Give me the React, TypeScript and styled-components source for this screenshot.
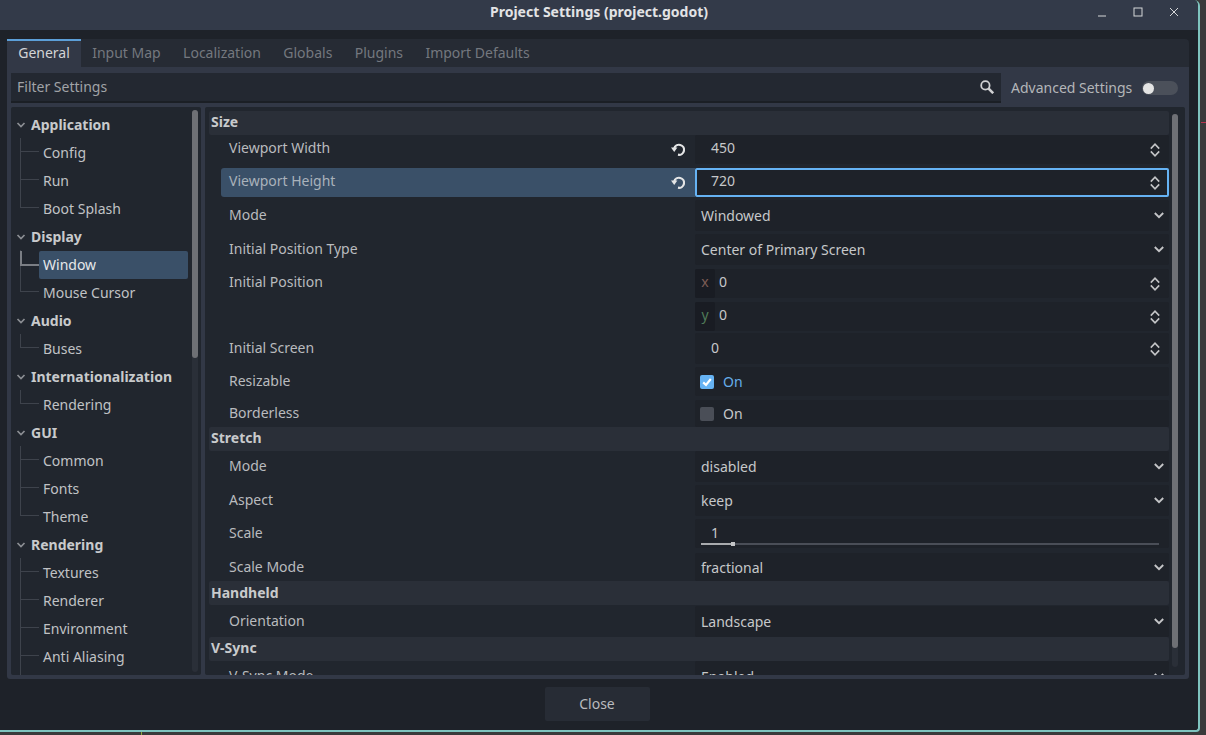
import React from 'react';
import styled, { createGlobalStyle } from 'styled-components';

const GlobalStyle = createGlobalStyle`
  html, body {
    margin: 0;
    padding: 0;
    background: #3a3a3b;
    overflow: hidden;
  }
  body {
    font-family: "Noto Sans", "Open Sans", sans-serif;
    font-size: 14px;
    color: #c6c8ca;
  }
`;

const treeGroups = [
  { name: 'Application', children: ['Config', 'Run', 'Boot Splash'] },
  { name: 'Display', children: ['Window', 'Mouse Cursor'] },
  { name: 'Audio', children: ['Buses'] },
  { name: 'Internationalization', children: ['Rendering'] },
  { name: 'GUI', children: ['Common', 'Fonts', 'Theme'] },
  { name: 'Rendering', children: ['Textures', 'Renderer', 'Environment', 'Anti Aliasing', ''] },
];

const tabs = ['General', 'Input Map', 'Localization', 'Globals', 'Plugins', 'Import Defaults'];

const ChevronDown = () => (
  <DropIcon width="10" height="7" viewBox="0 0 10 7">
    <polyline points="0.8,1 5,5.2 9.2,1" fill="none" stroke="#c4c5c7" strokeWidth="1.9" />
  </DropIcon>
);

const UpDown = () => (
  <SpinIcon width="10" height="14" viewBox="0 0 10 14">
    <polyline points="0.8,5.6 5,1.2 9.2,5.6" fill="none" stroke="#c4c5c7" strokeWidth="1.6" />
    <polyline points="0.8,8.4 5,12.8 9.2,8.4" fill="none" stroke="#c4c5c7" strokeWidth="1.6" />
  </SpinIcon>
);

const ResetIcon = () => (
  <ResetSvg width="14" height="14" viewBox="0 0 14 14">
    <path d="M3.2 6.5 A5 5 0 1 1 7 12.7" fill="none" stroke="#e4e5e6" strokeWidth="2.2" />
    <polygon points="0,5.6 6.4,5.6 3.2,10" fill="#e4e5e6" />
  </ResetSvg>
);

const Arrow = () => (
  <ArrowSvg width="10" height="6" viewBox="0 0 10 6">
    <polyline points="1.5,1 5,4.5 8.5,1" fill="none" stroke="#8b8e93" strokeWidth="1.7" />
  </ArrowSvg>
);

const Spin: React.FC<{ value: string; focused?: boolean; top?: number; height?: number }> = ({ value, focused, top, height }) => (
  <SpinBox $focused={focused} $top={top} $height={height}>
    <SpinValue $tall={height !== undefined}>{value}</SpinValue>
    <UpDown />
  </SpinBox>
);

const Option: React.FC<{ value: string; height?: number; top?: number }> = ({ value, top, height }) => (
  <OptionBox $top={top} $height={height}>
    <span>{value}</span>
    <ChevronDown />
  </OptionBox>
);

const App: React.FC = () => (
  <Screen>
    <GlobalStyle />
    <Window>
      <TitleBar>
        <TitleText>Project Settings (project.godot)</TitleText>
        <TitleButtons>
          <svg width="12" height="12" viewBox="0 0 12 12">
            <line x1="2" y1="10" x2="10" y2="10" stroke="#d6d7d9" strokeWidth="1" />
          </svg>
          <svg width="12" height="12" viewBox="0 0 12 12">
            <rect x="2" y="2" width="8" height="8" fill="none" stroke="#d6d7d9" strokeWidth="1" />
          </svg>
          <svg width="12" height="12" viewBox="0 0 12 12">
            <path d="M2 2 L10 10 M10 2 L2 10" stroke="#d6d7d9" strokeWidth="1" />
          </svg>
        </TitleButtons>
      </TitleBar>

      <Body>
        <TabBar>
          {tabs.map((t, i) => (
            <Tab key={t} $active={i === 0}>{t}</Tab>
          ))}
        </TabBar>

        <TabPanel>
          <FilterRow>
            <FilterInput>
              <FilterText>Filter Settings</FilterText>
              <svg width="14" height="14" viewBox="0 0 14 14">
                <circle cx="5.4" cy="5.4" r="4.2" fill="none" stroke="#d0d1d3" strokeWidth="1.8" />
                <line x1="8.4" y1="8.4" x2="13.2" y2="13.2" stroke="#d0d1d3" strokeWidth="2.6" />
              </svg>
            </FilterInput>
            <AdvancedLabel>Advanced Settings</AdvancedLabel>
            <Toggle><Knob /></Toggle>
          </FilterRow>

          <Columns>
            <TreePanel>
              <TreeList>
                {treeGroups.map(g => (
                  <div key={g.name}>
                    <TreeHeader>
                      <Arrow />
                      {g.name}
                    </TreeHeader>
                    {g.children.map((c, i) => (
                      <TreeChild key={c}>
                        <Guide $last={i === g.children.length - 1} $active={c === 'Window'} />
                        <TreeLabel $selected={c === 'Window'}>{c}</TreeLabel>
                      </TreeChild>
                    ))}
                  </div>
                ))}
              </TreeList>
              <TreeScroll><TreeGrab /></TreeScroll>
            </TreePanel>

            <SettingsPanel>
              <SettingsList>
                <SectionHeader>Size</SectionHeader>

                <Row>
                  <Label>Viewport Width<ResetIcon /></Label>
                  <Spin value="450" />
                </Row>
                <Row>
                  <Label $hover>Viewport Height<ResetIcon /></Label>
                  <Spin value="720" focused top={4} />
                </Row>
                <Row>
                  <Label>Mode</Label>
                  <Option value="Windowed" top={3} />
                </Row>
                <Row>
                  <Label>Initial Position Type</Label>
                  <Option value="Center of Primary Screen" top={3} />
                </Row>
                <Row>
                  <Label $top={4}>Initial Position</Label>
                  <VectorStack>
                    <VectorField>
                      <Axis $color="#7d5c56">x</Axis>
                      <span>0</span>
                      <UpDown />
                    </VectorField>
                    <VectorField>
                      <Axis $color="#4f7a58">y</Axis>
                      <span>0</span>
                      <UpDown />
                    </VectorField>
                  </VectorStack>
                </Row>
                <Row>
                  <Label>Initial Screen</Label>
                  <Spin value="0" top={2} height={31} />
                </Row>
                <Row>
                  <Label $bottom={3}>Resizable</Label>
                  <CheckBox $top={3}>
                    <CheckOn>
                      <svg width="14" height="14" viewBox="0 0 14 14">
                        <polyline points="3.2,7.4 6,10 10.8,4" fill="none" stroke="#fff" strokeWidth="2.2" />
                      </svg>
                    </CheckOn>
                    <OnText $on>On</OnText>
                  </CheckBox>
                </Row>
                <Row>
                  <Label $bottom={1}>Borderless</Label>
                  <CheckBox $top={4} $short>
                    <CheckOff />
                    <OnText>On</OnText>
                  </CheckBox>
                </Row>

                <SectionHeader>Stretch</SectionHeader>
                <Row>
                  <Label>Mode</Label>
                  <Option value="disabled" />
                </Row>
                <Row>
                  <Label>Aspect</Label>
                  <Option value="keep" top={3} />
                </Row>
                <Row>
                  <Label $bottom={3}>Scale</Label>
                  <SliderBox>
                    <SliderValue>1</SliderValue>
                    <SliderTrack>
                      <SliderFill />
                      <SliderHandle />
                    </SliderTrack>
                  </SliderBox>
                </Row>
                <Row>
                  <Label $bottom={1}>Scale Mode</Label>
                  <Option value="fractional" top={5} height={28} />
                </Row>

                <SectionHeader $bottom={1}>Handheld</SectionHeader>
                <Row>
                  <Label>Orientation</Label>
                  <Option value="Landscape" top={1} />
                </Row>

                <SectionHeader>V-Sync</SectionHeader>
                <Row>
                  <Label>V-Sync Mode</Label>
                  <Option value="Enabled" />
                </Row>
              </SettingsList>
              <SettingsScroll><SettingsGrab /></SettingsScroll>
            </SettingsPanel>
          </Columns>
        </TabPanel>

        <Footer>
          <CloseButton>Close</CloseButton>
        </Footer>
      </Body>
    </Window>
  </Screen>
);

const Screen = styled.div`
  width: 1206px;
  height: 735px;
  overflow: hidden;
  background:
    linear-gradient(#b8344e, #b8344e) 1201px 122px / 5px 1px no-repeat,
    linear-gradient(#8aa63a, #8aa63a) 141px 732px / 1px 3px no-repeat,
    #3a3a3b;
`;

const Window = styled.div`
  box-sizing: border-box;
  width: 1200px;
  height: 732px;
  display: flex;
  flex-direction: column;
  background: #1e2229;
  border-right: 2px solid #7fc4bf;
  border-bottom: 2px solid #7fc4bf;
  border-top-right-radius: 6px;
  border-bottom-right-radius: 4px;
  overflow: hidden;
`;

const TitleBar = styled.div`
  flex: 0 0 30px;
  height: 30px;
  display: flex;
  align-items: center;
  justify-content: center;
  background: #333a49;
  position: relative;
`;

const TitleText = styled.div`
  font-weight: 700;
  font-size: 14px;
  color: #e2e3e5;
  margin-top: -8px;
`;

const TitleButtons = styled.div`
  position: absolute;
  right: 18px;
  top: 6px;
  display: flex;
  gap: 24px;
`;

const Body = styled.div`
  flex: 1;
  display: flex;
  flex-direction: column;
  padding: 9px 9px 0 7px;
`;

const TabBar = styled.div`
  height: 28px;
  display: flex;
  background: #262b34;
  border-top-right-radius: 4px;
`;

const Tab = styled.div<{ $active?: boolean }>`
  box-sizing: border-box;
  height: 28px;
  padding: 0 11.2px 3px;
  display: flex;
  align-items: center;
  border-top: 2px solid ${p => (p.$active ? '#5c9fd8' : 'transparent')};
  background: ${p => (p.$active ? '#323846' : 'transparent')};
  color: ${p => (p.$active ? '#d2d4d6' : '#74787f')};
`;

const TabPanel = styled.div`
  height: 612px;
  box-sizing: border-box;
  padding: 6px 4px 4px;
  display: flex;
  flex-direction: column;
  gap: 4px;
  background: #323846;
  border-bottom-left-radius: 3px;
  border-bottom-right-radius: 3px;
`;

const FilterRow = styled.div`
  height: 30px;
  display: flex;
  align-items: center;
`;

const FilterInput = styled.div`
  box-sizing: border-box;
  width: 990px;
  height: 30px;
  padding: 0 8px 0 6px;
  display: flex;
  align-items: center;
  justify-content: space-between;
  background: #232831;
  border-bottom: 2px solid #1b1f25;
  color: #a0a3a7;

  svg {
    margin-right: -1px;
  }
`;

const FilterText = styled.span`
  margin-top: -2px;
`;

const AdvancedLabel = styled.div`
  margin-left: 10px;
  margin-top: -2px;
  color: #b4b6b9;
`;

const Toggle = styled.div`
  box-sizing: border-box;
  width: 36px;
  height: 14px;
  margin-left: 10px;
  padding: 1px;
  border-radius: 7px;
  background: #4b505a;
`;

const Knob = styled.div`
  width: 11px;
  height: 11px;
  margin-top: 0.5px;
  border-radius: 50%;
  background: #e4e4e4;
`;

const Columns = styled.div`
  flex: 1;
  min-height: 0;
  display: flex;
  gap: 4px;
`;

const TreePanel = styled.div`
  width: 190px;
  display: flex;
  padding-top: 3px;
  box-sizing: border-box;
  background: #21262e;
  border-radius: 2px;
  overflow: hidden;
`;

const TreeList = styled.div`
  flex: 1;
  min-width: 0;
  overflow: hidden;
`;

const TreeHeader = styled.div`
  height: 28px;
  display: flex;
  align-items: center;
  font-weight: 700;
  color: #c8cacc;
  padding-left: 5px;
`;

const ArrowSvg = styled.svg`
  margin-right: 5px;
  margin-top: 2px;
  flex: none;
`;

const TreeChild = styled.div`
  height: 28px;
  display: flex;
  padding-left: 9px;
  padding-right: 4px;
`;

const Guide = styled.div<{ $last?: boolean; $active?: boolean }>`
  flex: 0 0 19px;
  height: ${p => (p.$last ? '14px' : '28px')};
  background: ${p =>
    p.$active
      ? `linear-gradient(#7b7e84, #7b7e84) 0 14px / 100% 2px no-repeat,
         linear-gradient(#7b7e84, #7b7e84) 0 1px / 2px 14px no-repeat,
         linear-gradient(#3e434c, #3e434c) 0 0 / 1px 100% no-repeat`
      : `linear-gradient(#3e434c, #3e434c) 0 13px / 100% 1px no-repeat,
         linear-gradient(#3e434c, #3e434c) 0 0 / 1px 100% no-repeat`};
`;

const TreeLabel = styled.div<{ $selected?: boolean }>`
  flex: 1;
  display: flex;
  align-items: center;
  padding-left: 4px;
  padding-bottom: ${p => (p.$selected ? 2 : 0)}px;
  margin-top: ${p => (p.$selected ? 1 : 0)}px;
  margin-bottom: ${p => (p.$selected ? -1 : 0)}px;
  border-radius: 2px;
  color: ${p => (p.$selected ? '#e6e8ea' : '#c0c2c5')};
  background: ${p => (p.$selected ? '#3a5068' : 'transparent')};
`;

const TreeScroll = styled.div`
  flex: 0 0 6px;
  height: 562px;
  margin-right: 3px;
  border-radius: 3px;
  background: #2a2f38;
`;

const TreeGrab = styled.div`
  height: 248px;
  border-radius: 3px;
  background: #6e7075;
`;

const SettingsPanel = styled.div`
  flex: 1;
  min-width: 0;
  display: flex;
  box-sizing: border-box;
  padding: 4px 7px 0 4px;
  background: #21262e;
  border-radius: 2px;
  overflow: hidden;
`;

const SettingsList = styled.div`
  width: 960px;
  overflow: hidden;
`;

const SettingsScroll = styled.div`
  flex: 0 0 6px;
  height: 553px;
  margin-left: 3px;
  margin-top: 3px;
  border-radius: 3px;
  background: #2a2f38;
`;

const SettingsGrab = styled.div`
  height: 534px;
  border-radius: 3px;
  background: #6e7075;
`;

const SectionHeader = styled.div<{ $bottom?: number }>`
  box-sizing: border-box;
  height: 24px;
  display: flex;
  align-items: center;
  padding: 0 0 ${p => p.$bottom ?? 3}px 2px;
  font-weight: 700;
  color: #c8cacc;
  background: #2a2f38;
  border-radius: 2px;
`;

const Row = styled.div`
  display: flex;
  margin-left: 12px;
`;

const Label = styled.div<{ $hover?: boolean; $top?: number; $bottom?: number }>`
  box-sizing: border-box;
  flex: 0 0 474px;
  align-self: ${p => (p.$top === undefined ? 'flex-end' : 'flex-start')};
  margin-top: ${p => p.$top ?? 0}px;
  height: 29px;
  display: flex;
  align-items: center;
  justify-content: space-between;
  padding: 0 10px ${p => p.$bottom ?? 5}px 8px;
  border-top-left-radius: 3px;
  border-bottom-left-radius: 3px;
  color: ${p => (p.$hover ? '#a9b2bb' : '#b9bbbe')};
  background: ${p => (p.$hover ? '#3a5068' : 'transparent')};
`;

const ResetSvg = styled.svg`
  flex: none;
  margin-top: 4px;
`;

const SpinBox = styled.div<{ $focused?: boolean; $top?: number; $height?: number }>`
  box-sizing: border-box;
  flex: 1;
  height: ${p => p.$height ?? 29}px;
  margin-top: ${p => p.$top ?? 0}px;
  display: flex;
  align-items: center;
  justify-content: space-between;
  padding: 0 ${p => (p.$focused ? 7 : 9)}px 0 ${p => (p.$focused ? 14 : 16)}px;
  background: #1e2229;
  border-radius: 2px;
  color: #c6c8ca;
  border: ${p => (p.$focused ? '2px solid #66b3f4' : 'none')};
`;

const SpinValue = styled.span<{ $tall?: boolean }>`
  margin-top: ${p => (p.$tall ? -3 : -5)}px;
`;

const SpinIcon = styled.svg`
  flex: none;
`;

const OptionBox = styled.div<{ $top?: number; $height?: number }>`
  box-sizing: border-box;
  flex: 1;
  height: ${p => p.$height ?? 31}px;
  margin-top: ${p => p.$top ?? 0}px;
  display: flex;
  align-items: center;
  justify-content: space-between;
  padding: 0 5px 0 6px;
  background: #1e2229;
  border-radius: 2px;
  color: #c6c8ca;
`;

const DropIcon = styled.svg`
  flex: none;
`;

const VectorStack = styled.div`
  flex: 1;
  margin-top: 4px;
  display: flex;
  flex-direction: column;
  gap: 4px;
`;

const VectorField = styled.div`
  height: 29px;
  display: flex;
  align-items: center;
  padding-right: 9px;
  background: #1e2229;
  border-radius: 2px;
  color: #c6c8ca;

  span {
    flex: 1;
    margin-top: -5px;
  }
`;

const Axis = styled.div<{ $color: string }>`
  flex: 0 0 20px;
  height: 29px;
  margin-right: 4px;
  display: flex;
  align-items: center;
  justify-content: center;
  padding-bottom: 4px;
  box-sizing: border-box;
  border-radius: 2px;
  background: #191c23;
  color: ${p => p.$color};
`;

const CheckBox = styled.div<{ $top?: number; $short?: boolean }>`
  box-sizing: border-box;
  flex: 1;
  height: ${p => (p.$short ? 27 : 29)}px;
  margin-top: ${p => p.$top ?? 0}px;
  display: flex;
  align-items: center;
  padding-left: 5px;
  background: #1e2229;
  border-radius: 2px;
`;

const CheckOn = styled.div`
  width: 14px;
  height: 14px;
  border-radius: 2px;
  background: #66b3f4;

  svg {
    display: block;
  }
`;

const CheckOff = styled.div`
  width: 14px;
  height: 14px;
  border-radius: 2px;
  background: #4a4e57;
`;

const OnText = styled.span<{ $on?: boolean }>`
  margin-left: 9px;
  color: ${p => (p.$on ? '#66aeea' : '#c6c8ca')};
`;

const SliderBox = styled.div`
  box-sizing: border-box;
  flex: 1;
  height: 29px;
  margin-top: 3px;
  padding: 4px 10px 0 6px;
  background: #1e2229;
  border-radius: 2px;
`;

const SliderValue = styled.div`
  height: 20px;
  line-height: 19px;
  padding-left: 10px;
  color: #c6c8ca;
`;

const SliderTrack = styled.div`
  height: 2px;
  display: flex;
  align-items: center;
  background: #4a4e57;
`;

const SliderFill = styled.div`
  width: 30px;
  height: 2px;
  background: #a9abae;
`;

const SliderHandle = styled.div`
  width: 4px;
  height: 4px;
  background: #c4c5c7;
`;

const Footer = styled.div`
  flex: 1;
  display: flex;
  justify-content: center;
  padding: 8px 2px 0 0;
`;

const CloseButton = styled.div`
  box-sizing: border-box;
  width: 105px;
  height: 34px;
  padding-bottom: 1px;
  display: flex;
  align-items: center;
  justify-content: center;
  border-radius: 2px;
  background: #272c35;
  color: #b9bbbe;
`;

export default App;
